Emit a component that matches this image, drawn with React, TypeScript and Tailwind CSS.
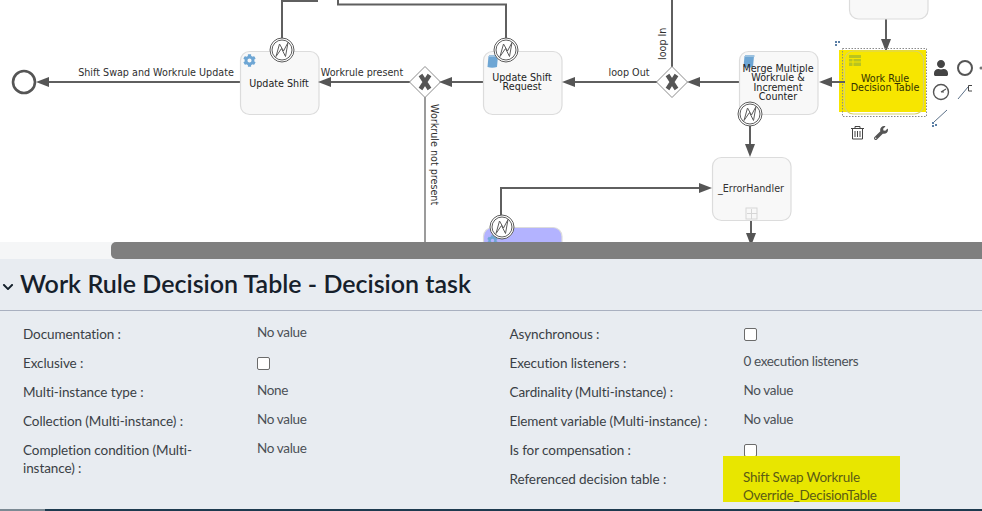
import { FaCog, FaUser, FaWrench, FaChevronDown } from "react-icons/fa";

const leftRows = [
  { label: "Documentation :", value: "No value" },
  { label: "Exclusive :", check: true },
  { label: "Multi-instance type :", value: "None" },
  { label: "Collection (Multi-instance) :", value: "No value" },
  { label: "Completion condition (Multi-instance) :", value: "No value" },
];

const rightRows = [
  { label: "Asynchronous :", check: true },
  { label: "Execution listeners :", value: "0 execution listeners" },
  { label: "Cardinality (Multi-instance) :", value: "No value" },
  { label: "Element variable (Multi-instance) :", value: "No value" },
  { label: "Is for compensation :", check: true },
];

const Task = ({ x, y, fill = "#f8f8f8", h = 63 }: { x: number; y: number; fill?: string; h?: number }) => (
  <rect x={x + 0.5} y={y + 0.5} width={78.5} height={h} rx={9} fill={fill} stroke="#dcdcdc" strokeWidth={1.2} />
);

const Bolt = ({ x, y }: { x: number; y: number }) => (
  <g transform={`translate(${x} ${y})`} fill="none" stroke="#5c5c5c">
    <circle r={12} fill="#ffffff" strokeWidth={1} />
    <circle r={10} strokeWidth={1} />
    <path d="M-6 6.5 L-2.5 -6 L1.5 1 L6 -7.5 L3.5 6.5 L-0.5 -1.5 Z" strokeWidth={1} strokeLinejoin="round" />
  </g>
);

const Gateway = ({ x, y }: { x: number; y: number }) => (
  <g transform={`translate(${x} ${y})`}>
    <path d="M0 -15.5 L15.5 0 L0 15.5 L-15.5 0 Z" fill="#ffffff" stroke="#8c8c8c" strokeWidth={1} />
    <path d="M-4.5 -7 L4.5 7 M4.5 -7 L-4.5 7" stroke="#555555" strokeWidth={4.4} />
  </g>
);

// arrow head, tip at x,y pointing in dir
const Arrow = ({ x, y, dir }: { x: number; y: number; dir: "left" | "right" | "down" }) => {
  if (dir === "left") return <path d={`M${x} ${y} l13 -5 v10 Z`} fill="#555555" />;
  if (dir === "right") return <path d={`M${x} ${y} l-13 -5 v10 Z`} fill="#555555" />;
  return <path d={`M${x} ${y} l-5 -13 h10 Z`} fill="#555555" />;
};

const Script = ({ x, y }: { x: number; y: number }) => (
  <g transform={`translate(${x} ${y})`}>
    <path d="M1.5 1 H11 L10 12 Q5 13.5 0.5 12 Z" fill="#6ea6d4" />
    <path d="M2 0 H11.5 V2 H2 Z" fill="#9cc2e0" />
  </g>
);

const Label = ({ x, y, children, anchor = "middle", color = "#2f2f2f" }: { x: number; y: number; children: string; anchor?: "middle" | "start"; color?: string }) => (
  <text x={x} y={y} textAnchor={anchor} fill={color} fontSize="9.6" fontFamily="'DejaVu Sans', sans-serif">
    {children}
  </text>
);

const Diagram = () => (
  <svg width={982} height={242} viewBox="0 0 982 242" className="block">
    {/* flows */}
    <g fill="none" stroke="#5f5f5f" strokeWidth={2}>
      <path d="M282 40 V1 H318" />
      <path d="M338 0 V4.5 H506 V40" />
      <path d="M44 82 H240" />
      <path d="M328 82 H410" />
      <path d="M449 82 H483" />
      <path d="M573 82 H657" />
      <path d="M698 82 H739" />
      <path d="M672 0 V67" />
      <path d="M750 124 V146" />
      <path d="M501 216 V188 H702" />
      <path d="M751 220 V236" />
      <path d="M886 19 V42" />
    </g>
    <path d="M425 97 V242" stroke="#7a7a7a" strokeWidth={1.5} />

    {/* end event */}
    <circle cx={24} cy={82} r={11} fill="#ffffff" stroke="#555555" strokeWidth={2.6} />
    <Arrow x={36} y={82} dir="left" />
    <Label x={156} y={76}>Shift Swap and Workrule Update</Label>

    {/* update shift */}
    <Task x={240} y={51} />
    <FaCog x={243} y={54} size={13} color="#6ea6d4" />
    <Label x={279} y={87} color="#222222">Update Shift</Label>
    <Bolt x={282} y={50} />
    <Arrow x={318} y={82} dir="left" />
    <Label x={362} y={76}>Workrule present</Label>

    <Gateway x={425} y={82} />
    <Arrow x={439} y={82} dir="left" />
    <text transform="translate(431 104) rotate(90)" fill="#2f2f2f" fontSize="9.6" fontFamily="'DejaVu Sans', sans-serif">
      Workrule not present
    </text>

    {/* update shift request */}
    <Task x={483} y={51} />
    <Script x={487} y={55} />
    <Label x={522} y={81} color="#222222">Update Shift</Label>
    <Label x={522} y={90} color="#222222">Request</Label>
    <Bolt x={506} y={50} />
    <Arrow x={562} y={82} dir="left" />
    <Label x={629} y={76}>loop Out</Label>

    <Gateway x={672} y={82} />
    <Arrow x={687} y={82} dir="left" />
    <text transform="translate(666 60) rotate(-90)" fill="#2f2f2f" fontSize="9.6" fontFamily="'DejaVu Sans', sans-serif">
      loop In
    </text>

    {/* merge */}
    <Task x={739} y={51} />
    <Script x={743} y={55} />
    <Label x={778} y={72} color="#222222">Merge Multiple</Label>
    <Label x={778} y={81} color="#222222">Workrule &amp;</Label>
    <Label x={778} y={90.5} color="#222222">Increment</Label>
    <Label x={778} y={100} color="#222222">Counter</Label>
    <Bolt x={750} y={114} />
    <Arrow x={750} y={157} dir="down" />

    {/* error handler */}
    <Task x={712} y={157} />
    <Label x={751} y={192} color="#333333">_ErrorHandler</Label>
    <rect x={746} y={208} width={11} height={11} fill="none" stroke="#d6d6d6" />
    <path d="M751.5 209 V219 M747 213.5 H757" stroke="#d6d6d6" />
    <Arrow x={712} y={188} dir="right" />
    <Arrow x={751} y={246} dir="down" />

    {/* purple task */}
    <Task x={483} y={227} fill="#b3b3ff" />
    <FaCog x={487} y={235} size={11} color="#6ea6d4" />
    <Bolt x={502} y={227} />

    {/* top task */}
    <rect x={849.5} y={-30} width={78.5} height={49} rx={9} fill="#f8f8f8" stroke="#dcdcdc" strokeWidth={1.2} />
    <Arrow x={886} y={52} dir="down" />

    {/* selected task */}
    <rect x={839} y={50} width={87} height={62} fill="#f7e600" />
    <rect x={844.5} y={51} width={79} height={63} rx={9} fill="none" stroke="#d8d26a" strokeWidth={1.2} />
    <rect x={842.5} y={48.5} width={84} height={68} fill="none" stroke="#8a8a8a" strokeDasharray="1.5 1.5" />
    <rect x={849} y={55} width={12} height={11} fill="#b9c420" />
    <path d="M849 58.5 H861 M849 62 H861 M853 58.5 V66" stroke="#f7e600" strokeWidth={1} />
    <Label x={885} y={82} color="#333300">Work Rule</Label>
    <Label x={885} y={91} color="#333300">Decision Table</Label>
    <path d="M845 82 H829" stroke="#5f5f5f" strokeWidth={2} />
    <Arrow x={819} y={82} dir="left" />

    {/* context pad */}
    <path d="M835 41 h2 v2 h-2 Z M838 41 h2 v2 h-2 Z M835 44 h2 v2 h-2 Z" fill="#5b7fa6" />
    <FaUser x={933} y={60} size={16} color="#444444" />
    <circle cx={965} cy={68} r={7} fill="none" stroke="#555555" strokeWidth={2} />
    <circle cx={981} cy={68} r={1.5} fill="#777777" />
    <circle cx={941} cy={92} r={7.5} fill="none" stroke="#555555" strokeWidth={1.4} />
    <path d="M941 92 L946 89 M941 92 H944" stroke="#555555" strokeWidth={1.2} />
    <path d="M958 99 L968 87" stroke="#5b7088" strokeWidth={1} />
    <path d="M972 85.5 H968.5 V91 H972" fill="none" stroke="#444444" strokeWidth={1} />
    <path d="M934 122 L947 110" stroke="#5b7088" strokeWidth={1} />
    <path d="M932 122 h2 v2 h-2 Z M935 124 h2 v2 h-2 Z M932 125 h2 v2 h-2 Z" fill="#5b7fa6" />
    {/* trash */}
    <g fill="none" stroke="#444444" strokeWidth={1}>
      <path d="M851 128.5 H864 M855 128.5 V126.5 H860 V128.5" />
      <path d="M852.5 129 V139 H862.5 V129" />
      <path d="M855 131 V137 M857.5 131 V137 M860 131 V137" />
    </g>
    <FaWrench x={874} y={126} size={14} color="#555555" />
  </svg>
);

const Check = () => (
  <span className="block w-[13px] h-[13px] rounded-[2px] border border-[#6b6b6b] bg-white" />
);

const Row = ({ label, value, check }: { label: string; value?: string; check?: boolean }) => (
  <div className="flex items-start min-h-[29px]">
    <div className="w-[234px] pr-[30px] text-[#3a3f45] text-[13.5px] tracking-[-0.08px] leading-[18px] pt-[2px]">{label}</div>
    {check ? (
      <div className="pt-[5px]">
        <Check />
      </div>
    ) : (
      <div className="text-[#4b5056] text-[13.5px] tracking-[-0.35px] leading-[18px]">{value}</div>
    )}
  </div>
);

export default function App() {
  return (
    <div className="w-[982px] h-[511px] overflow-hidden flex flex-col bg-white font-['Lato',sans-serif]">
      <div className="h-[242px] shrink-0">
        <Diagram />
      </div>

      <div className="h-[17px] shrink-0 bg-[#f5f6f7] pl-[111px]">
        <div className="h-full bg-[#7f7f7f] rounded-l-[5px]" />
      </div>

      <div className="flex-1 bg-[#e8ecf1] flex flex-col">
        <div className="h-[52px] shrink-0 border-b border-[#a9b0c0] flex items-center pl-[2px] pb-[2px]">
          <FaChevronDown size={12} className="text-[#14202b] mt-[6px] mr-[6px]" />
          <h1 className="text-[25px] font-semibold text-[#16202b] leading-none">Work Rule Decision Table - Decision task</h1>
        </div>

        <div className="flex flex-1 pt-[12px]">
          <div className="w-[487px] pl-[23px]">
            {leftRows.map((r) => (
              <Row key={r.label} {...r} />
            ))}
          </div>
          <div className="flex-1 pl-[22.5px]">
            {rightRows.map((r) => (
              <Row key={r.label} {...r} />
            ))}
            <div className="flex items-start">
              <div className="w-[213.5px] text-[#3a3f45] text-[13.5px] tracking-[-0.08px] leading-[18px] pt-[2px]">Referenced decision table :</div>
              <div className="w-[177px] h-[46px] -mt-[12px] bg-[#e8e600] pl-[20px] pt-[12px] text-[#5b5c14] text-[13.5px] tracking-[-0.25px] leading-[18px]">
                Shift Swap Workrule Override_DecisionTable
              </div>
            </div>
          </div>
        </div>

        <div className="h-[2px] shrink-0 bg-[#1d3a4f]">
          <div className="h-full w-[45px] bg-[#7c8a94]" />
        </div>
      </div>
    </div>
  );
}
